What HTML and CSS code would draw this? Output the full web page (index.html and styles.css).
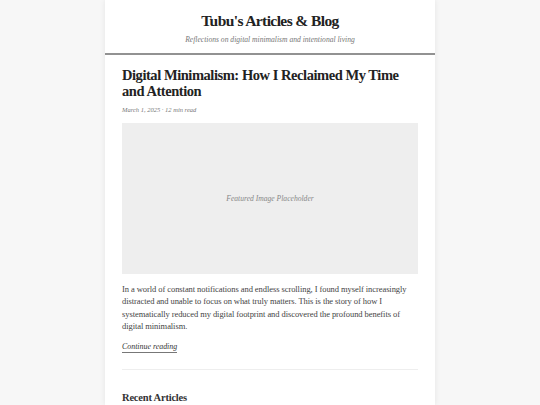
FILE: index.html
```html
<!DOCTYPE html>
<html lang="en">
<head>
<meta charset="utf-8">
<title>Tubu's Articles &amp; Blog</title>
<link rel="stylesheet" href="styles.css">
</head>
<body>
<div class="page">
  <header class="site-header">
    <h1 class="site-title">Tubu's Articles &amp; Blog</h1>
    <p class="site-tagline">Reflections on digital minimalism and intentional living</p>
  </header>
  <main class="content">
    <article class="featured">
      <h2 class="post-title">Digital Minimalism: How I Reclaimed My Time and Attention</h2>
      <p class="post-meta">March 1, 2025 · 12 min read</p>
      <div class="post-image">Featured Image Placeholder</div>
      <p class="post-excerpt">In a world of constant notifications and endless scrolling, I found myself increasingly distracted and unable to focus on what truly matters. This is the story of how I systematically reduced my digital footprint and discovered the profound benefits of digital minimalism.</p>
      <a class="read-more" href="#">Continue reading</a>
    </article>
    <section class="recent">
      <h3 class="recent-title">Recent Articles</h3>
    </section>
  </main>
</div>
</body>
</html>
```

FILE: styles.css
```css
html, body {
  margin: 0;
  padding: 0;
}
body {
  background: #f7f7f7;
  font-family: "Liberation Serif", serif;
  color: #444;
}
.page {
  width: 330px;
  margin: 0 auto;
  height: 405px;
  overflow: hidden;
  background: #fff;
  box-shadow: 0 0 6px rgba(0, 0, 0, 0.08);
}
.site-header {
  text-align: center;
  padding: 11px 17px 8px;
  border-bottom: 2px solid #929292;
}
.site-title {
  margin: 0;
  font-weight: bold;
  font-size: 15.5px;
  letter-spacing: -0.6px;
  line-height: 20px;
  color: #222;
}
.site-tagline {
  margin: 4px 0 0;
  font-style: italic;
  font-size: 7.6px;
  line-height: 10px;
  color: #777;
}
.content {
  padding: 12px 17px 0;
}
.post-title {
  margin: 0;
  font-weight: bold;
  font-size: 14.5px;
  letter-spacing: -0.45px;
  line-height: 16px;
  color: #222;
}
.post-meta {
  margin: 6px 0 0;
  font-style: italic;
  font-size: 6.5px;
  line-height: 9px;
  color: #777;
}
.post-image {
  margin-top: 9px;
  height: 151px;
  background: #eeeeee;
  display: flex;
  align-items: center;
  justify-content: center;
  font-style: italic;
  font-size: 7.6px;
  color: #888;
}
.post-excerpt {
  margin: 9px 0 0;
  font-size: 8.5px;
  letter-spacing: -0.07px;
  line-height: 12.4px;
  color: #444;
}
.read-more {
  display: block;
  width: max-content;
  margin-top: 8px;
  font-style: italic;
  font-size: 7.9px;
  line-height: 11px;
  color: #333;
  text-decoration: none;
  border-bottom: 1px solid #777;
}
.featured {
  padding-bottom: 16px;
  border-bottom: 1px solid #eee;
}
.recent {
  padding-top: 21px;
}
.recent-title {
  margin: 0;
  font-weight: bold;
  font-size: 10.5px;
  letter-spacing: -0.2px;
  line-height: 14px;
  color: #333;
}
```
